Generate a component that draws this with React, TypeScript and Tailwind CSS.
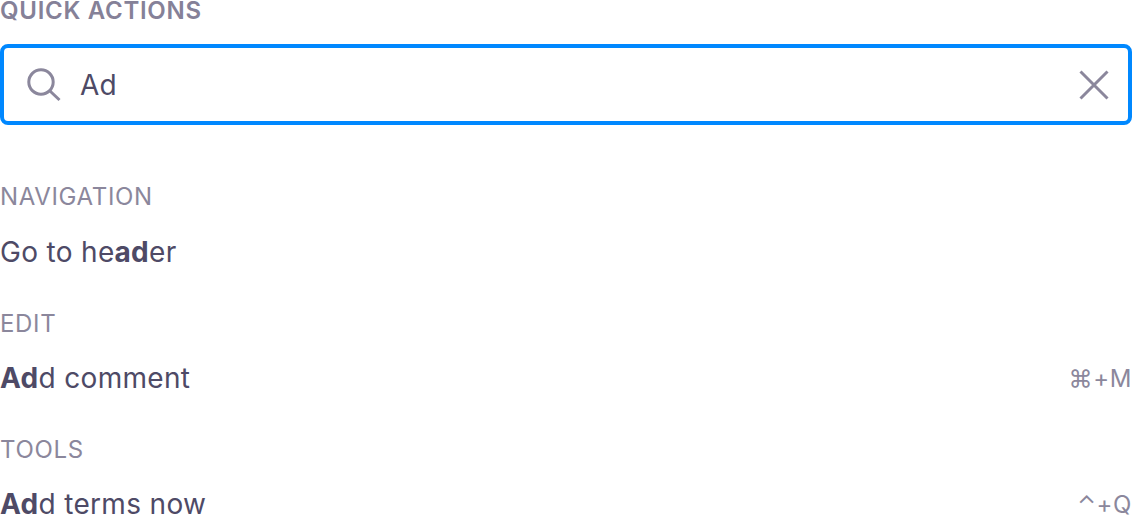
import { ReactNode } from 'react';

const groups: { title: string; label: ReactNode; keys?: ReactNode }[] = [
  { title: 'NAVIGATION', label: <>Go to he<b className="font-bold">ad</b>er</> },
  { title: 'EDIT', label: <><b className="font-bold">Ad</b>d comment</>, keys: '⌘+M' },
  { title: 'TOOLS', label: <><b className="font-bold">Ad</b>d terms now</>, keys: '⌃+Q' },
];

export default function App() {
  return (
    <div className="h-[516px] w-[1132px] overflow-hidden bg-white font-['Inter',sans-serif] text-[#4e4a66]">
      <h1 className="h-[22px] text-[24px] leading-[22px] font-semibold tracking-[0.72px] text-[#858198]">QUICK ACTIONS</h1>
      <div className="mt-[22px] flex h-[81px] items-center rounded-lg border-4 border-[#0088ff] pr-[18px] pl-[22px]">
        <svg className="mt-px size-9" viewBox="0 0 36 36" fill="none" stroke="#8b879c" strokeWidth="3">
          <circle cx="15" cy="15" r="12.2" />
          <path d="m24 24 9.5 9" />
        </svg>
        <span className="ml-[18px] flex-1 text-[28px] leading-8 tracking-[0.2px]">Ad</span>
        <svg className="size-8" viewBox="0 0 32 32" fill="none" stroke="#8b879c" strokeWidth="3">
          <path d="m2.5 2.5 27 27M29.5 2.5l-27 27" />
        </svg>
      </div>
      <div className="mt-[57px] flex flex-col gap-[45px]">
        {groups.map((group) => (
          <section key={group.title} className="flex h-[81px] flex-col justify-between first:h-[82px]">
            <h2 className="text-[24px] leading-[30px] tracking-[0.65px] text-[#8b879c]">{group.title}</h2>
            <div className="flex h-6 items-center justify-between">
              <span className="text-[28px] leading-6 tracking-[0.32px]">{group.label}</span>
              <kbd className="pt-px font-['Inter',sans-serif] text-[24px] leading-6 tracking-[0.6px] text-[#8b879c]">{group.keys}</kbd>
            </div>
          </section>
        ))}
      </div>
    </div>
  );
}
